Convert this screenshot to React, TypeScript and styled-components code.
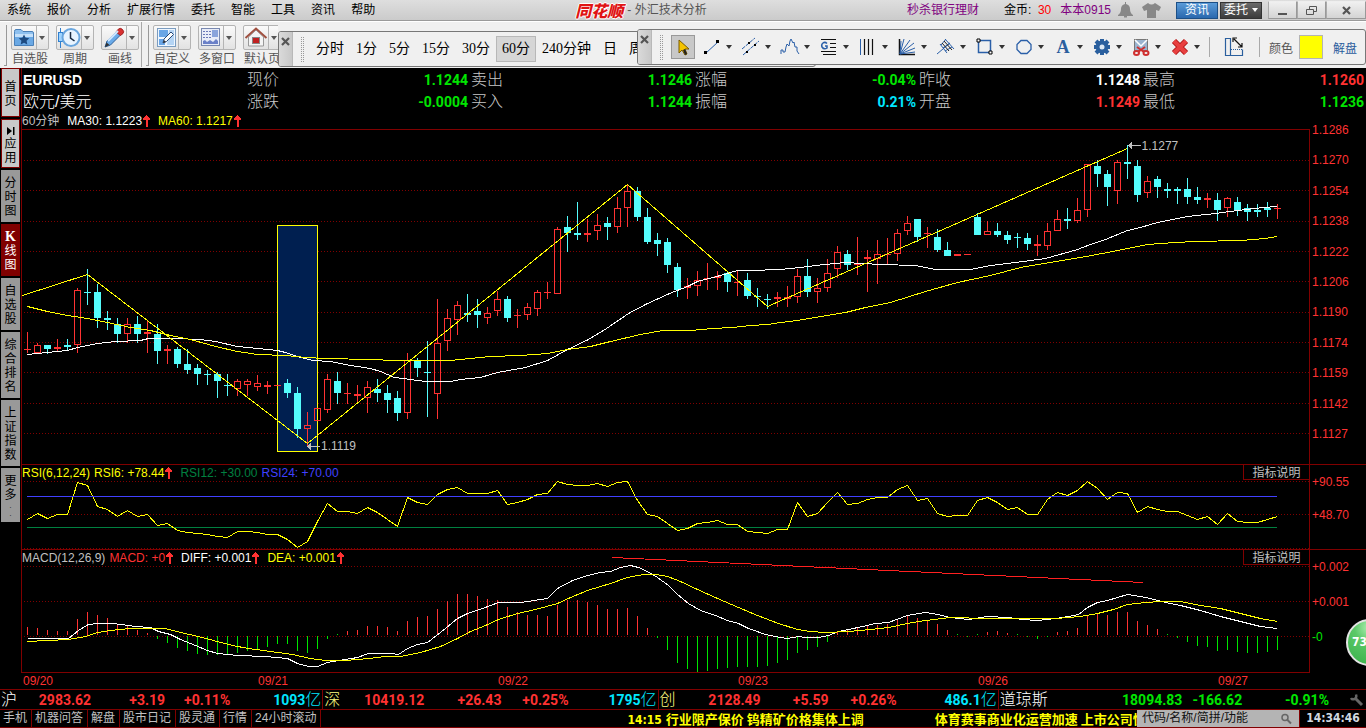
import React from 'react';
import styled, { createGlobalStyle } from 'styled-components';

const sans = '"Liberation Sans", "Noto Sans CJK SC", sans-serif';
const song = '"Liberation Serif", "Noto Sans CJK SC", serif';
const num = 'Roboto, "Noto Sans CJK SC", sans-serif';
const cond = '"DejaVu Sans Condensed", "Noto Sans CJK SC", sans-serif';

const RED = '#ff3232';
const GREEN = '#00e600';
const CYAN = '#00e6ff';
const LINE = '#800000';
const UP = '#ff3232';
const DOWN = '#54fcfc';

const GlobalStyle = createGlobalStyle`
  * { box-sizing: border-box; }
  body { margin: 0; background: #000; font-family: ${sans}; font-size: 12px; }
  button { font: inherit; color: inherit; border: 0; padding: 0; margin: 0; background: none; cursor: pointer; white-space: nowrap; }
  dl, dt, dd { margin: 0; }
  a { text-decoration: none; color: inherit; }
  svg { display: block; }
`;

const Page = styled.div`
  position: relative;
  display: flex;
  flex-direction: column;
  min-height: 100vh;
  min-width: 1100px;
  overflow: hidden;
  color: #c0c0c0;
`;

/* ---------- title bar ---------- */

const TitleBar = styled.header`
  display: flex;
  align-items: center;
  justify-content: space-between;
  height: 21px;
  background: linear-gradient(#dedede, #cbcbcb);
  border-bottom: 1px solid #9a9a9a;
  color: #000;
  line-height: 20px;
`;

const Menu = styled.nav`
  display: flex;
  gap: 16px;
  padding-left: 7px;
`;

const AppTitle = styled.div`
  display: flex;
  align-items: center;
  gap: 4px;
  color: #555;
`;

const Logo = styled.strong`
  color: #e01414;
  font: italic 900 16px/20px "Noto Sans CJK SC", sans-serif;
  text-shadow: 1px 0 #fff, -1px 0 #fff, 0 1px #fff, 0 -1px #fff;
`;

const TitleRight = styled.div`
  display: flex;
  align-items: center;
`;

const PurpleLink = styled.a`
  color: #800080;
`;

const Coins = styled.span`
  margin: 0 9px 0 25px;
  b { color: #f00; font-weight: 400; }
`;

const TitleIcons = styled.div`
  display: flex;
  align-items: center;
  gap: 9px;
  margin: 0 15px 0 7px;
`;

const TitleButton = styled.button<{ $blue?: boolean }>`
  width: 42px;
  height: 17px;
  margin-right: 2px;
  border: 1px solid ${p => (p.$blue ? '#1c4f86' : '#333')};
  background: ${p => (p.$blue ? 'linear-gradient(#5a9bd8, #2a68ae)' : 'linear-gradient(#6a6a6a, #3c3c3c)')};
  color: #fff;
  line-height: 15px;
  display: flex;
  align-items: center;
  justify-content: center;
  gap: 4px;
`;

const WindowButtons = styled.div`
  display: flex;
  margin-left: 4px;
`;

const WindowButton = styled.button<{ $wide?: boolean }>`
  width: ${p => (p.$wide ? 40 : 29)}px;
  height: 18px;
  border: 1px solid #999;
  border-top-color: #eee;
  border-left-color: #aaa;
  background: linear-gradient(#f0f0f0, #d4d4d4);
  display: flex;
  align-items: center;
  justify-content: center;
`;

/* ---------- tool bars ---------- */

const ToolArea = styled.div`
  display: flex;
  align-items: flex-start;
  height: 47px;
  background: #f0f0f0;
  border-top: 1px solid #fff;
  color: #000;
`;

const MainTools = styled.div`
  display: flex;
  flex: none;
  width: 278px;
  height: 45px;
  overflow: hidden;
`;

const ToolGroup = styled.div`
  display: flex;
  gap: 7px;
  flex: none;
  padding: 3px 2px 0 4px;
  border-right: 1px solid #a8a8a8;
  &::before {
    content: '';
    width: 2px;
    height: 40px;
    margin-right: -3px;
    border-right: 1px solid #999;
    border-bottom: 1px solid #999;
  }
`;

const BigTool = styled.button`
  width: 38px;
  color: #555;
  display: flex;
  flex-direction: column;
  align-items: center;
  line-height: 18px;
`;

const BigToolFace = styled.span`
  display: flex;
  align-items: center;
  width: 38px;
  height: 25px;
  border: 1px solid #b4b4b4;
  border-radius: 2px;
  background: linear-gradient(#fafafa, #e2e2e2);
  > :first-child { flex: 1; height: 23px; border-right: 1px solid #b4b4b4; }
  > :last-child { margin: 0 3px 0 2px; }
`;

const FloatBar = styled.div<{ $under?: boolean }>`
  position: relative;
  z-index: ${p => (p.$under ? 0 : 1)};
  display: flex;
  align-items: center;
  flex: ${p => (p.$under ? 'none' : '1')};
  width: ${p => (p.$under ? '538px' : 'auto')};
  margin: ${p => (p.$under ? '9px -179px 0 0' : '7px 0 0 0')};
  height: 36px;
  overflow: hidden;
  border: 1px solid #777;
  border-radius: 3px;
  background: #f0f0f0;
`;

const CloseStrip = styled.button`
  align-self: stretch;
  flex: none;
  width: 14px;
  padding-top: 5px;
  display: flex;
  justify-content: center;
  background: linear-gradient(90deg, #dadada, #c8c8c8);
  border-right: 1px solid #b8b8b8;
`;

const Grip = styled.i`
  flex: none;
  width: 3px;
  height: 25px;
  margin: 0 6px 0 8px;
  border: 1px dotted #999;
  border-width: 0 1px;
`;

const PeriodButton = styled.button<{ $on?: boolean }>`
  flex: none;
  height: 26px;
  padding: 0 5px;
  border: 1px solid ${p => (p.$on ? '#b8b8b8' : 'transparent')};
  background: ${p => (p.$on ? '#d6d6d6' : 'none')};
  font: 14px/24px ${song};
`;

const PointerButton = styled.button`
  flex: none;
  width: 24px;
  height: 24px;
  margin: 0 5px 0 2px;
  border: 1px solid #999;
  background: #c8c8c8;
`;

const DrawTool = styled.button`
  flex: none;
  display: flex;
  align-items: center;
  gap: 2px;
  width: 39px;
`;

const Rule = styled.i`
  flex: none;
  width: 1px;
  height: 20px;
  margin: 0 13px 0 2px;
  background: #aaa;
`;

const PlainTool = styled.button<{ $blue?: boolean }>`
  flex: none;
  margin-right: ${p => (p.$blue ? 0 : 12)}px;
  color: ${p => (p.$blue ? '#2a5c9c' : '#555')};
`;

const ColorLabel = styled.label`
  display: flex;
  align-items: center;
  flex: none;
  gap: 6px;
  margin: 0 10px 0 -4px;
  color: #555;
`;

const Swatch = styled.button`
  width: 24px;
  height: 24px;
  border: 1px solid #b4b4b4;
  background: #ff0;
`;

/* ---------- workspace ---------- */

const Workspace = styled.div`
  display: flex;
  flex: 1;
`;

const Sidebar = styled.nav`
  display: flex;
  flex-direction: column;
  gap: 2px;
  flex: none;
  width: 21px;
  padding: 0 1px 0 1px;
  background: #000;
`;

const SideTab = styled.button<{ $kind?: 'light' | 'on' }>`
  display: flex;
  flex-direction: column;
  align-items: center;
  padding: ${p => (p.$kind === 'light' ? '2px 0 0' : '6px 0 4px')};
  min-height: ${p => (p.$kind === 'light' ? 49 : 52)}px;
  justify-content: center;
  border: ${p => (p.$kind === 'light' ? `1px solid ${LINE}` : '0')};
  background: ${p => (p.$kind === 'light' ? '#c8c8c8' : p.$kind === 'on' ? LINE : '#999')};
  color: ${p => (p.$kind === 'on' ? '#fff' : '#000')};
  font-size: 12px;
  line-height: 14px;
  b { font-family: ${song}; font-size: 14px; }
  small { font-size: 7px; line-height: 8px; }
`;

const Main = styled.main`
  display: flex;
  flex-direction: column;
  flex: 1;
  min-width: 0;
  border-left: 1px solid ${LINE};
`;

const Quotes = styled.dl`
  display: grid;
  grid-template-columns: repeat(6, 1fr);
  grid-auto-rows: 22px;
  padding: 1px 0 0;
`;

const Quote = styled.div`
  display: flex;
  justify-content: space-between;
  align-items: center;
  padding: 0 2px 0 1px;
`;

const QuoteName = styled.dt<{ $title?: boolean }>`
  color: ${p => (p.$title ? '#fff' : '#c8c8c8')};
  font: 300 16px/22px ${sans};
  b { font-size: 14px; font-weight: 700; }
`;

const QuoteValue = styled.dd<{ $c: string }>`
  color: ${p => p.$c};
  font: 700 14px/22px ${num};
`;

const InfoRow = styled.div<{ $over?: boolean }>`
  display: flex;
  align-items: center;
  height: 16px;
  ${p => p.$over && 'position: absolute; inset: 0 0 auto 0; z-index: 1;'}
`;

const Stat = styled.span<{ $c: string; $gap?: number }>`
  display: flex;
  align-items: center;
  gap: 1px;
  margin-right: ${p => p.$gap ?? 8}px;
  color: ${p => p.$c};
  line-height: 16px;
  white-space: pre;
`;

const HelpButton = styled.button`
  align-self: flex-start;
  width: 66px;
  height: 15px;
  margin-left: auto;
  border: 1px solid ${LINE};
  border-width: 0 0 1px 1px;
  color: #c0c0c0;
  line-height: 16px;
`;

const Panel = styled.section<{ $size: number }>`
  display: grid;
  grid-template-columns: minmax(0, 1fr) 57px;
  grid-template-rows: minmax(0, 1fr);
  flex: ${p => p.$size} 1 ${p => p.$size}px;
  min-height: 0;
`;

const Plot = styled.div<{ $last?: boolean }>`
  position: relative;
  min-height: 0;
  border-top: 1px solid ${LINE};
  border-bottom: ${p => (p.$last ? `1px solid ${LINE}` : '0')};
`;

const Drawing = styled.svg`
  position: absolute;
  width: 100%;
  height: 100%;
  shape-rendering: crispEdges;
  polyline, line { vector-effect: non-scaling-stroke; fill: none; }
`;

const Axis = styled.div<{ $kind: 'price' | 'rsi' | 'macd' }>`
  display: flex;
  flex-direction: column;
  padding-left: 2px;
  border-left: 1px solid ${LINE};
  color: ${RED};
  line-height: 16px;
  ${p => (p.$kind === 'price'
    ? 'justify-content: space-between; padding-bottom: 22px; span:first-child { margin-top: -7px; }'
    : `border-top: 1px solid ${LINE}; padding-top: 9px; gap: ${p.$kind === 'rsi' ? 17 : 19}px;`)}
`;

const Zero = styled.span`
  color: ${GREEN};
`;

const Marker = styled.span<{ $x: number; $y: number }>`
  position: absolute;
  left: ${p => p.$x}%;
  top: ${p => p.$y}%;
  display: flex;
  align-items: center;
  gap: 1px;
  height: 16px;
  margin-top: -8px;
  color: #c0c0c0;
`;

const Dates = styled.div`
  display: grid;
  grid-template-columns: 235fr 240fr 240fr 240fr 240fr 148fr;
  height: 16px;
  padding-left: 23px;
  color: ${RED};
  line-height: 16px;
`;

/* ---------- footer ---------- */

const IndexBar = styled.div`
  display: flex;
  height: 20px;
  border-top: 1px solid ${LINE};
  line-height: 20px;
`;

const IndexItem = styled.a<{ $w: number; $cols: string }>`
  display: grid;
  grid-template-columns: ${p => p.$cols};
  flex: ${p => p.$w} 1 0;
  min-width: 0;
  padding: 0 1px;
  border-right: 1px solid ${LINE};
  font: 700 14px/20px ${num};
  text-align: right;
  white-space: nowrap;
  &:last-of-type { border-right: 0; }
`;

const IndexLead = styled.span`
  display: flex;
  justify-content: space-between;
`;

const IndexName = styled.span<{ $c: string }>`
  color: ${p => p.$c};
  font: 300 16px/20px ${sans};
`;

const Val = styled.span<{ $c: string }>`
  color: ${p => p.$c};
  i { font: 300 16px/20px ${sans}; }
`;

const Wrench = styled.button`
  flex: none;
  width: 36px;
  padding-left: 20px;
`;

const StatusBar = styled.footer`
  display: flex;
  height: 19px;
  border: 1px solid ${LINE};
  border-width: 1px 0;
`;

const BottomTab = styled.button`
  flex: none;
  padding: 0 4px 0 3px;
  border-right: 1px solid ${LINE};
  color: #c0c0c0;
  line-height: 17px;
`;

const Ticker = styled.div`
  display: flex;
  flex: 1;
  min-width: 0;
  overflow: hidden;
  padding-left: 306px;
  gap: 71px;
  color: #ff0;
  font: 700 13px/17px "Noto Sans CJK SC", sans-serif;
  white-space: nowrap;
`;

const NewsItem = styled.a`
  flex: none;
  time { font: 700 12px/17px ${cond}; margin-right: 4px; }
`;

const Search = styled.label`
  display: flex;
  align-items: center;
  flex: none;
  width: 163px;
  padding: 0 5px;
  border-right: 1px solid ${LINE};
  background: #b4b4b4;
  input {
    flex: 1;
    min-width: 0;
    border: 0;
    padding: 0;
    outline: 0;
    background: none;
    font: 12px/17px ${sans};
    color: #000;
  }
  input::placeholder { color: #111; opacity: 1; }
`;

const Clock = styled.time`
  flex: none;
  width: 66px;
  text-align: center;
  color: #d0d8e0;
  font: 700 12px/17px ${cond};
`;

const Ball = styled.button`
  position: absolute;
  right: -27px;
  bottom: 62px;
  z-index: 2;
  width: 47px;
  height: 47px;
  padding: 0 0 0 4px;
  border: 2px solid #e4e4e4;
  border-radius: 50%;
  background: radial-gradient(circle at 50% 15%, #b0f0b4 0, #5cc868 35%, #37b048 100%);
  color: #fff;
  font: 700 12px/43px ${cond};
  text-align: left;
`;

/* ---------- small drawings ---------- */

const Caret = ({ color = '#333' }: { color?: string }) => (
  <svg width="6" height="4" viewBox="0 0 6 4"><path d="M0 0h6L3 4z" fill={color} /></svg>
);

const UpArrow = () => (
  <svg width="7" height="12" viewBox="0 0 7 12" shapeRendering="crispEdges">
    <path d="M3 0h1v1h1v1h1v1h1v2H5v7H3V5H0V3h1V2h1V1h1z" fill={UP} />
  </svg>
);

const Cross = ({ size = 9 }: { size?: number }) => (
  <svg width={size} height={size} viewBox="0 0 9 9"><path d="M1 1l7 7M8 1L1 8" stroke="#555" strokeWidth="2.200" /></svg>
);

const LeftArrow = () => (
  <svg width="13" height="7" viewBox="0 0 13 7" shapeRendering="crispEdges">
    <path d="M0 3h1V2h1V1h1V0h1v3h9v1H4v3H3V6H2V5H1V4H0z" fill="#c0c0c0" />
  </svg>
);

const Svg24 = ({ children }: { children: React.ReactNode }) => (
  <svg width="24" height="24" viewBox="0 0 24 24" fill="none" stroke="#2a5fa8" strokeWidth="1">{children}</svg>
);

const bigIcons: Record<string, React.ReactNode> = {
  folder: (
    <>
      <path d="M2.500 5.500q0-2 1.500-2h5l2 2h9q1.500 0 1.500 1.500v12.500h-19z" fill="#8ec0ef" stroke="#4a80b8" />
      <path d="M3 8h18v11H3z" fill="#6aa8e4" stroke="none" />
      <path d="M3 8h18v3H3z" fill="#c4e0fa" stroke="none" />
      <path d="M12 8.500l1.600 3.300 3.700.5-2.700 2.500.7 3.600-3.300-1.700-3.300 1.700.7-3.600-2.700-2.500 3.700-.5z" fill="#1d4a80" stroke="none" />
    </>
  ),
  clock: (
    <>
      <path d="M3.500 2v20" stroke="#3080d0" />
      <rect x="1.500" y="6.500" width="4" height="9" fill="#9fd4ff" stroke="#3080d0" />
      <circle cx="14" cy="11.500" r="8.500" fill="#e8f4ff" stroke="#6aa6de" strokeWidth="2" />
      <path d="M13.500 6v6l4 3" stroke="#1a2a40" strokeWidth="1.500" />
    </>
  ),
  pencil: (
    <>
      <path d="M3 21l2-6L16 4l4 3.500L8.500 19z" fill="#6aaae8" stroke="#2b5f9a" />
      <path d="M14 6l2.500-3q2-1.500 4 .5t.5 4L18.500 9.500z" fill="#d83030" stroke="#a02020" />
      <path d="M6 15L16 5" stroke="#d0e8ff" strokeWidth="2" />
      <path d="M3 21l1.500-4.500L7.500 19z" fill="#333" stroke="none" />
    </>
  ),
  custom: (
    <>
      <rect x="3.500" y="2.500" width="18" height="18" fill="#eef6ff" stroke="#7a9cc0" />
      <path d="M5 4h9v7H5zM5 13h6v6H5z" fill="#6aa6e6" stroke="none" />
      <path d="M15 4h5v15h-7z" fill="#b4d4f4" stroke="none" />
      <path d="M9 17l1-4 7-7 2.500 2.500-7 7z" fill="#fff" stroke="#2a4a78" />
      <path d="M9 17l1-3 2 2z" fill="#333" stroke="none" />
    </>
  ),
  windows: (
    <>
      <rect x="2.500" y="2.500" width="18" height="17" fill="#e8ecf8" stroke="#7888b0" />
      <path d="M4 5.500h8M4 8.500h8M4 11.500h8" stroke="#6a78b8" strokeDasharray="2 1" />
      <path d="M13 4h6v7h-6z" fill="#8aa4dc" stroke="none" />
      <path d="M4 18v-3l2-1 2 2 3-2 3 2 3-3 2 2v3z" fill="#6a80c8" stroke="none" />
    </>
  ),
  home: (
    <>
      <path d="M4.500 11v9h15v-9L12 4z" fill="#f4f4f4" stroke="#999" />
      <path d="M1.500 12L12 2.500 22.500 12" stroke="#a05040" strokeWidth="2" />
      <rect x="8.500" y="11.500" width="7" height="6" fill="#c02020" stroke="#888" />
    </>
  ),
};

const BigIcon = ({ name }: { name: string }) => (
  <span><svg width="24" height="23" viewBox="0 0 24 23" fill="none">{bigIcons[name]}</svg></span>
);

const drawIcons: { name: string; art: React.ReactNode }[] = [
  { name: '线段', art: <><path d="M6 18L18 7" /><path d="M4 16h3v3H4zM16 5h3v3h-3z" fill="#000" stroke="none" /></> },
  { name: '平行线', art: <><path d="M3 14L16 3M4 20L20 6" strokeDasharray="4 1" /><path d="M9 7h2v2H9zM15 9h2v2h-2zM7 16h2v2H7z" fill="#000" stroke="none" /></> },
  { name: '波浪线', art: <path d="M3 19v-4h2v2h2l1-5 1-3 2 2 1-5 1-2 2 4 1-1 1 5h2v4l2 3" /> },
  { name: '黄金分割', art: <><path d="M4 4.500h15M13 8.500h6M13 12.500h6M4 16.500h15M6 19.500h13" stroke="#111" /><path d="M10 8.500Q8 6.500 6 8t-1 4q2 3 5 1v-2H8" strokeWidth="1.500" /></> },
  { name: '周期线', art: <><path d="M8.500 4v16M12.500 4v16M16.500 4v16" stroke="#111" strokeWidth="1.200" /><path d="M4.500 4v16" stroke="#2a5fa8" /></> },
  { name: '扇形线', art: <><path d="M4.500 4v15.500H20" stroke="#111" strokeWidth="1.500" /><path d="M5 19L9 4M5 19L15 5M5 19L19 8M5 19l15-6M5 19l15-2M5 19L6 6" /></> },
  { name: '音叉线', art: <><path d="M3 19L16 8M6 9l7 9M11 4l9 10" /><path d="M7 10l5-6M9 13l7-5M11 16l7-4" strokeWidth="1" /><path d="M8 8l7 8M10 6l8 9" stroke="#222" /></> },
  { name: '矩形', art: <><rect x="5.500" y="5.500" width="12" height="12" strokeWidth="1.500" /><path d="M4 4h3v3H4zM16 16h3v3h-3z" fill="#fff" stroke="#000" /></> },
  { name: '圆形', art: <path d="M9 5.500h6l4 4v5l-4 4H9l-4-4v-5z" strokeWidth="1.300" /> },
  { name: '文字', art: null },
  { name: '设置', art: <><path d="M12 4v16M4 12h16M6 6l12 12M18 6L6 18" stroke="#2a5f9e" strokeWidth="4" /><circle cx="12" cy="12" r="6.500" fill="#2a5f9e" stroke="none" /><circle cx="12" cy="12" r="2.500" fill="#dde8f4" stroke="none" /></> },
  { name: '截图', art: <><rect x="5.500" y="4.500" width="13" height="11" fill="#9ab4d0" stroke="#777" /><path d="M6 5l6 6 6-6" stroke="#fff" strokeWidth="1.500" /><ellipse cx="7.500" cy="18" rx="2.500" ry="2" stroke="#d03030" strokeWidth="2" /><ellipse cx="17" cy="18" rx="2.500" ry="2" stroke="#d03030" strokeWidth="2" /><path d="M8 12l7 5M16 12l-7 5" stroke="#d03030" strokeWidth="2" /></> },
  { name: '删除', art: <><path d="M6 6l12 12M18 6L6 18" stroke="#b01818" strokeWidth="6" /><path d="M6 6l12 12M18 6L6 18" stroke="#e84040" strokeWidth="4" /></> },
];

const LetterA = styled.span`
  width: 24px;
  color: #2a5f9e;
  font: 700 18px/24px "Liberation Serif", serif;
  text-align: center;
`;

/* ---------- data ---------- */

/* Each candle: direction, then the y of high, body top, body bottom and low. */
const candles = `r332 349 350 353,r343 345 353 353,c345 345 349 354,r339 347 349 351,c339 345 347 350,r288 290 345 353,c269 292 293 305,c284 292 318 328,c311 318 320 330,c318 324 334 343,
r318 324 334 343,c316 324 334 343,r320 332 334 353,c324 334 351 364,r345 349 351 364,c347 349 364 368,c349 364 370 374,c364 368 374 385,c370 374 375 385,c372 374 381 398,
c374 385 386 396,r379 381 389 396,r379 381 385 396,r375 383 387 391,r381 385 387 394,r385 385 386 386,c379 383 393 398,c387 393 429 438,r412 425 429 446,r408 408 421 421,
r374 379 410 413,c372 381 393 404,r383 393 394 404,r385 394 396 402,r381 387 398 413,c379 389 393 402,c385 393 400 413,c391 398 413 421,r353 360 413 419,c358 360 368 377,
c341 372 373 417,r299 343 394 419,r309 318 341 351,r301 305 320 335,c294 313 315 322,c299 311 315 328,r307 313 318 324,r291 299 311 316,c296 299 318 322,r309 315 316 328,
r303 307 315 320,r290 292 309 316,r282 292 293 299,r227 229 294 294,c216 227 233 252,c202 233 235 240,r219 233 235 242,r214 225 231 240,c217 223 227 240,r197 208 227 233,
r184 191 208 227,c187 191 217 221,c208 217 242 244,c233 240 244 256,c238 242 265 273,c263 267 290 297,r278 286 288 299,r271 280 286 296,r263 278 279 290,r271 276 278 290,
c271 273 282 292,r271 282 283 296,c273 280 296 299,c288 296 297 307,c294 299 300 309,r292 297 299 307,r286 297 299 307,r269 276 297 303,c259 276 292 297,r278 288 292 303,
r259 273 288 292,r246 252 269 278,c250 254 265 270,r237 264 265 275,r250 257 259 292,r240 254 259 284,r238 254 255 265,r229 233 254 261,r216 223 231 235,c219 219 237 242,
r227 233 234 248,c229 237 250 252,c242 250 256 256,r254 254 256 256,r254 254 255 255,c213 217 235 235,r221 231 235 235,c223 231 235 237,c231 235 240 244,c233 237 238 248,
c233 238 244 250,r235 244 246 256,r223 231 246 250,r210 219 231 231,c208 219 221 229,r198 210 221 223,r164 164 210 217,c160 166 174 187,c170 174 187 206,r160 162 191 204,
c145 162 164 179,c160 166 195 202,r176 181 193 198,c176 179 187 198,c183 189 191 198,c187 189 191 204,c178 189 197 204,c187 197 200 204,r193 198 200 208,c193 200 210 221,
r197 198 208 217,c197 202 210 216,c204 208 212 221,c204 210 212 217,c202 208 210 217,r204 208 209 219`
  .split(',')
  .map(s => {
    const t = s.trim();
    return { up: t[0] === 'r', v: t.slice(1).split(' ').map(Number) };
  });

const MA30 = '27,354 47,352 67,350 77,347 87,345 97,343 115,341 140,340 148,338 175,338 200,339 215,341 237,346 257,348 277,350 285,352 300,357 313,360 330,361 350,365 370,368 380,371 394,377 410,379 425,381 450,381 460,379 480,377 497,372 525,367 547,360 567,349 588,339 606,328 628,313 645,304 669,293 687,286 697,281 720,275 737,270 750,270 780,269 800,267 815,265 845,262 880,264 915,265 935,269 970,269 990,265 1015,262 1045,258 1077,249 1090,244 1105,239 1127,230 1140,227 1157,222 1187,216 1215,213 1237,210 1263,207 1277,206';
const MA60 = '27,306 47,311 67,315 87,318 107,322 130,327 150,330 170,335 190,339 215,346 237,351 257,354 285,355 305,357 325,358 370,359 395,360 450,360 470,358 490,356 520,355 547,353 567,349 590,346 610,341 640,334 662,330 690,330 712,328 732,327 750,325 767,324 780,322 797,320 820,316 845,312 865,307 890,302 925,291 957,282 990,275 1020,267 1050,262 1080,257 1107,252 1127,248 1147,244 1175,242 1195,241 1240,240 1265,238 1277,236';
const ZIGZAG = '22,295 87,274 307,443 627,184 767,306 1127,148';

const RSI = [519, 513, 518, 514, 514, 482, 485, 506, 509, 516, 510, 516, 514, 525, 523, 530, 532, 533, 534, 536, 537, 531, 531, 532, 534, 534, 539, 547, 541, 521, 503, 511, 511, 513, 507, 512, 519, 526, 497, 502, 504, 494, 489, 487, 493, 493, 493, 490, 504, 502, 499, 494, 493, 481, 484, 485, 485, 483, 486, 482, 481, 500, 514, 516, 523, 530, 528, 523, 522, 520, 524, 524, 531, 532, 533, 529, 529, 502, 516, 513, 502, 492, 504, 503, 499, 497, 497, 489, 485, 500, 498, 513, 516, 515, 515, 500, 497, 502, 509, 507, 514, 514, 499, 492, 495, 490, 481, 488, 499, 492, 493, 512, 506, 509, 511, 511, 515, 519, 516, 524, 513, 521, 522, 522, 519, 516];

const HIST = [8, 7, 5, 4, 4, 16, 23, 20, 17, 11, 9, 5, 2, -3, -7, -12, -15, -18, -19, -19, -19, -17, -15, -13, -11, -8, -8, -15, -17, -13, -3, 1, 4, 5, 9, 9, 8, 4, 14, 18, 19, 26, 34, 41, 41, 39, 36, 35, 28, 23, 20, 20, 19, 30, 35, 35, 33, 30, 26, 26, 27, 19, 7, -2, -14, -27, -33, -36, -35, -33, -32, -31, -31, -31, -30, -27, -24, -17, -14, -11, -6, 4, 6, 7, 9, 10, 11, 15, 19, 17, 15, 11, 5, 1, -1, 1, 3, 4, 2, 1, -1, -3, -1, 3, 4, 7, 20, 22, 20, 23, 23, 14, 10, 6, 1, -2, -6, -10, -11, -15, -14, -16, -17, -17, -16, -14];

const DIFF = '27,638 68,638 78,630 88,624 97,623 113,623 135,626 150,627 158,631 170,634 180,639 195,645 207,650 217,653 227,654 237,655 265,656 287,658 297,663 308,666 317,666 327,662 345,659 357,657 368,653 390,653 398,654 407,648 417,644 427,642 440,632 457,618 467,613 482,608 498,602 520,602 547,598 557,588 572,580 587,575 600,572 610,571 620,567 630,565 638,567 647,571 657,577 668,585 677,594 688,603 700,610 715,615 727,620 738,623 748,628 765,634 780,637 787,638 798,636 805,637 818,637 828,635 838,631 848,629 862,626 875,623 888,622 907,615 925,612 937,614 950,617 968,619 987,616 1008,617 1022,619 1037,620 1055,618 1068,616 1078,614 1087,607 1097,602 1107,600 1117,597 1127,594 1140,596 1150,598 1165,602 1180,605 1200,610 1220,616 1240,621 1260,626 1277,628';
const DEA = '27,641 47,640 68,639 85,636 97,632 110,630 130,628 165,628 180,632 198,636 213,640 232,645 248,648 270,651 292,654 310,658 325,660 345,660 368,658 385,656 400,656 420,652 440,646 457,638 470,631 485,625 498,619 517,613 535,609 557,603 570,597 587,590 610,583 627,577 643,574 655,574 667,576 680,581 697,589 717,598 738,607 757,615 778,623 797,629 810,631 825,632 848,631 870,629 888,627 907,623 925,620 950,617 987,618 1030,618 1055,618 1080,616 1097,613 1113,609 1127,604 1145,602 1160,601 1180,601 1200,605 1220,608 1240,613 1260,618 1277,621';

const barX = (i: number) => 27 + i * 10;

const Grid = ({ rows }: { rows: number[] }) => (
  <>
    {rows.map(y => (
      <line key={y} x1="24" x2="1309" y1={y + 0.5} y2={y + 0.5} stroke={LINE} strokeDasharray="1 2" />
    ))}
  </>
);

const Curve = ({ points, color }: { points: string; color: string }) => (
  <polyline points={points} stroke={color} transform="translate(0.5 0.5)" />
);

const Candle = ({ i, up, v }: { i: number; up: boolean; v: number[] }) => {
  const [hi, top, bot, lo] = v;
  const x = barX(i);
  const h = bot - top;
  const hollow = up && h > 2;
  return (
    <g fill={up ? UP : DOWN}>
      {top > hi && <rect x={x} y={hi} width="1" height={top - hi} />}
      {lo > bot && <rect x={x} y={bot} width="1" height={lo - bot} />}
      {hollow
        ? <rect x={x - 2.5} y={top + 0.5} width="6" height={h - 1} fill="none" stroke={UP} />
        : <rect x={x - 3} y={top} width="7" height={h} />}
    </g>
  );
};

const PriceChart = () => (
  <Drawing viewBox="22 130 1287 334" preserveAspectRatio="none">
    <Grid rows={[160, 190, 221, 251, 281, 312, 342, 372, 403, 433]} />
    <rect x="277.500" y="225.500" width="40" height="226" fill="#001f50" stroke="#ff0" />
    {candles.map((c, i) => <Candle key={i} i={i} up={c.up} v={c.v} />)}
    <Curve points={MA30} color="#fff" />
    <Curve points={MA60} color="#ff0" />
    <Curve points={ZIGZAG} color="#ff0" />
  </Drawing>
);

const RsiChart = () => (
  <Drawing viewBox="22 465 1287 84" preserveAspectRatio="none">
    <Grid rows={[481, 514, 548]} />
    <line x1="27" x2="1277" y1="527.500" y2="527.500" stroke="#008040" />
    <Curve points={RSI.map((y, i) => `${barX(i)},${y}`).join(' ')} color="#ff0" />
    <line x1="27" x2="1277" y1="496.500" y2="496.500" stroke="#4040ff" />
  </Drawing>
);

const MacdChart = () => (
  <Drawing viewBox="22 550 1287 122" preserveAspectRatio="none">
    <Grid rows={[566, 601, 636]} />
    {HIST.map((v, i) => (
      <rect key={i} x={barX(i)} width="1" y={v > 0 ? 635 - v : 636} height={Math.abs(v)} fill={v > 1 ? UP : GREEN} />
    ))}
    <Curve points={DIFF} color="#fff" />
    <Curve points={DEA} color="#ff0" />
    <Curve points="612,557 1143,582" color="#ff2020" />
  </Drawing>
);

const quotes: [string, string, string][] = [
  ['现价', '1.1244', GREEN], ['卖出', '1.1246', GREEN], ['涨幅', '-0.04%', GREEN], ['昨收', '1.1248', '#fff'], ['最高', '1.1260', RED],
  ['涨跌', '-0.0004', GREEN], ['买入', '1.1244', GREEN], ['振幅', '0.21%', CYAN], ['开盘', '1.1249', RED], ['最低', '1.1236', GREEN],
];

const QuoteCell = ({ q }: { q: [string, string, string] }) => (
  <Quote><QuoteName>{q[0]}</QuoteName><QuoteValue $c={q[2]}>{q[1]}</QuoteValue></Quote>
);

const indexes = [
  { name: '沪', nc: '#fff', w: 323, cols: '90fr 74fr 65fr 91fr', c: RED, v: ['2983.62', '+3.19', '+0.11%'], sum: '1093' },
  { name: '深', nc: '#ffff80', w: 335, cols: '100fr 77fr 67fr 88fr', c: RED, v: ['10419.12', '+26.43', '+0.25%'], sum: '1795' },
  { name: '创', nc: '#ffff80', w: 340, cols: '101fr 68fr 68fr 100fr', c: RED, v: ['2128.49', '+5.59', '+0.26%'], sum: '486.1' },
  { name: '道琼斯', nc: '#fff', w: 332, cols: '183fr 60fr 87fr', c: GREEN, v: ['18094.83', '-166.62', '-0.91%'], sum: '' },
];

const Stacked = ({ text }: { text: string }) => (
  <>{[...text].map((ch, i) => (ch === 'K' ? <b key={i}>K</b> : ch === '.' ? <small key={i}>.</small> : <span key={i}>{ch}</span>))}</>
);

export default function App() {
  return (
    <Page>
      <GlobalStyle />
      <TitleBar>
        <Menu>
          {['系统', '报价', '分析', '扩展行情', '委托', '智能', '工具', '资讯', '帮助'].map(m => <button key={m}>{m}</button>)}
        </Menu>
        <AppTitle><Logo>同花顺</Logo><span>- 外汇技术分析</span></AppTitle>
        <TitleRight>
          <PurpleLink href="#">秒杀银行理财</PurpleLink>
          <Coins>金币: &nbsp;<b>30</b></Coins>
          <PurpleLink href="#">本本0915</PurpleLink>
          <TitleIcons>
            <svg width="15" height="16" viewBox="0 0 15 16" fill="#888"><path d="M7 0h1v2q4 1 4 5 0 4 3 6v1H0v-1q3-2 3-6 0-4 4-5zM6 14h3v1.500H6z" /></svg>
            <svg width="19" height="15" viewBox="0 0 19 15" fill="#888"><path d="M6 0q3.500 3 7 0l6 4-2 4-3-1v8H5V7L2 8 0 4z" /></svg>
          </TitleIcons>
          <TitleButton $blue>资讯</TitleButton>
          <TitleButton>委托<Caret color="#fff" /></TitleButton>
          <WindowButtons>
            <WindowButton aria-label="最小化"><svg width="9" height="9"><path d="M0 7h9v2H0z" fill="#555" /></svg></WindowButton>
            <WindowButton aria-label="还原"><svg width="11" height="9" fill="none" stroke="#555"><path d="M3.500 3V.5h7v5H8M.5 3.500h7v5h-7z" /></svg></WindowButton>
            <WindowButton $wide aria-label="关闭"><Cross /></WindowButton>
          </WindowButtons>
        </TitleRight>
      </TitleBar>

      <ToolArea>
        <MainTools>
          <ToolGroup>
            {[['folder', '自选股'], ['clock', '周期'], ['pencil', '画线']].map(([icon, label]) => (
              <BigTool key={label}><BigToolFace><BigIcon name={icon} /><Caret color="#555" /></BigToolFace>{label}</BigTool>
            ))}
          </ToolGroup>
          <ToolGroup>
            {[['custom', '自定义'], ['windows', '多窗口'], ['home', '默认页']].map(([icon, label]) => (
              <BigTool key={label}><BigToolFace><BigIcon name={icon} /><Caret color="#555" /></BigToolFace>{label}</BigTool>
            ))}
          </ToolGroup>
        </MainTools>
        <FloatBar $under>
          <CloseStrip aria-label="关闭周期栏"><Cross /></CloseStrip>
          <Grip />
          {['分时', '1分', '5分', '15分', '30分', '60分', '240分钟', '日', '周'].map(p => (
            <PeriodButton key={p} $on={p === '60分'}>{p}</PeriodButton>
          ))}
        </FloatBar>
        <FloatBar>
          <CloseStrip aria-label="关闭画线栏"><Cross /></CloseStrip>
          <Grip />
          <PointerButton aria-label="选择">
            <svg width="22" height="22" viewBox="0 0 22 22"><path d="M7 4v13l3-3 3 5 2-1-2-5h4z" fill="#f5c400" stroke="#7a5a00" /><path d="M11 14l2 5 2-1-2-5z" fill="#222" /></svg>
          </PointerButton>
          {drawIcons.map(d => (
            <DrawTool key={d.name} aria-label={d.name}>
              {d.art ? <Svg24>{d.art}</Svg24> : <LetterA>A</LetterA>}
              <Caret />
            </DrawTool>
          ))}
          <Rule />
          <PlainTool aria-label="区间">
            <svg width="22" height="22" viewBox="0 0 22 22" fill="none" stroke="#2a5f9e" strokeWidth="1.200">
              <path d="M2.500 2.500h5v17h-5zM7.500 19.500h12v-6" />
              <path d="M8 13.500h11" strokeDasharray="1 1" />
              <path d="M11 3l8 8M10 6V2h4M19 7v4h-4" stroke="#111" />
            </svg>
          </PlainTool>
          <Rule />
          <ColorLabel>颜色<Swatch aria-label="颜色" /></ColorLabel>
          <PlainTool $blue>解盘</PlainTool>
        </FloatBar>
      </ToolArea>

      <Workspace>
        <Sidebar>
          <SideTab $kind="light"><Stacked text="首页" /></SideTab>
          <SideTab $kind="light">
            <svg width="8" height="12" viewBox="0 0 8 12"><path d="M0 2l5 4-5 4zM6 2h1.500v8H6z" /></svg>
            <Stacked text="应用" />
          </SideTab>
          <SideTab><Stacked text="分时图" /></SideTab>
          <SideTab $kind="on"><Stacked text="K线图" /></SideTab>
          <SideTab><Stacked text="自选股" /></SideTab>
          <SideTab><Stacked text="综合排名" /></SideTab>
          <SideTab><Stacked text="上证指数" /></SideTab>
          <SideTab><Stacked text="更多.." /></SideTab>
        </Sidebar>
        <Main>
          <Quotes>
            <Quote><QuoteName $title><b>EURUSD</b></QuoteName></Quote>
            {quotes.slice(0, 5).map(q => <QuoteCell key={q[0]} q={q} />)}
            <Quote><QuoteName $title>欧元/美元</QuoteName></Quote>
            {quotes.slice(5).map(q => <QuoteCell key={q[0]} q={q} />)}
          </Quotes>
          <InfoRow>
            <Stat $c="#c0c0c0">60分钟</Stat>
            <Stat $c="#fff">MA30: 1.1223<UpArrow /></Stat>
            <Stat $c="#ff0">MA60: 1.1217<UpArrow /></Stat>
          </InfoRow>
          <Panel $size={335}>
            <Plot>
              <PriceChart />
              <Marker $x={22.15} $y={94.7}><LeftArrow />1.1119</Marker>
              <Marker $x={85.9} $y={4.7}><LeftArrow />1.1277</Marker>
            </Plot>
            <Axis $kind="price">
              {['1.1286', '1.1270', '1.1254', '1.1238', '1.1222', '1.1206', '1.1190', '1.1174', '1.1159', '1.1142', '1.1127'].map(p => <span key={p}>{p}</span>)}
            </Axis>
          </Panel>
          <Panel $size={85}>
            <Plot>
              <InfoRow $over>
                <Stat $c="#ff0" $gap={4}>RSI(6,12,24)</Stat>
                <Stat $c="#ff0">RSI6: +78.44<UpArrow /></Stat>
                <Stat $c="#008040" $gap={4}>RSI12: +30.00</Stat>
                <Stat $c="#4040ff">RSI24: +70.00</Stat>
                <HelpButton>指标说明</HelpButton>
              </InfoRow>
              <RsiChart />
            </Plot>
            <Axis $kind="rsi"><span>+90.55</span><span>+48.70</span></Axis>
          </Panel>
          <Panel $size={124}>
            <Plot $last>
              <InfoRow $over>
                <Stat $c="#c0c0c0" $gap={4}>MACD(12,26,9)</Stat>
                <Stat $c={RED}>MACD: +0<UpArrow /></Stat>
                <Stat $c="#fff">DIFF: +0.001<UpArrow /></Stat>
                <Stat $c="#ff0">DEA: +0.001<UpArrow /></Stat>
                <HelpButton>指标说明</HelpButton>
              </InfoRow>
              <MacdChart />
            </Plot>
            <Axis $kind="macd"><span>+0.002</span><span>+0.001</span><Zero>-0</Zero></Axis>
          </Panel>
        </Main>
      </Workspace>

      <Dates>
        {['09/20', '09/21', '09/22', '09/23', '09/26', '09/27'].map(d => <span key={d}>{d}</span>)}
      </Dates>

      <IndexBar>
        {indexes.map(x => (
          <IndexItem key={x.name} href="#" $w={x.w} $cols={x.cols}>
            <IndexLead><IndexName $c={x.nc}>{x.name}</IndexName><Val $c={x.c}>{x.v[0]}</Val></IndexLead>
            <Val $c={x.c}>{x.v[1]}</Val>
            <Val $c={x.c}>{x.v[2]}</Val>
            {x.sum && <Val $c={CYAN}>{x.sum}<i>亿</i></Val>}
          </IndexItem>
        ))}
        <Wrench aria-label="设置">
          <svg width="14" height="14" viewBox="0 0 14 14" fill="none" stroke="#666"><path d="M5 5l7 7" strokeWidth="3" /><path d="M6 1.500Q7 5 4.500 6T1 5" strokeWidth="2.500" /></svg>
        </Wrench>
      </IndexBar>

      <StatusBar>
        {['手机', '机器问答', '解盘', '股市日记', '股灵通', '行情', '24小时滚动'].map(t => <BottomTab key={t}>{t}</BottomTab>)}
        <Ticker>
          <NewsItem href="#"><time>14:15</time>行业限产保价 钨精矿价格集体上调</NewsItem>
          <NewsItem href="#">体育赛事商业化运营加速 上市公司快</NewsItem>
        </Ticker>
        <Search>
          <input aria-label="搜索" placeholder="代码/名称/简拼/功能" />
          <svg width="14" height="12" viewBox="0 0 14 12" fill="none" stroke="#666"><circle cx="5" cy="4.500" r="3" strokeWidth="1.500" /><path d="M7 6.500l4 4" strokeWidth="2" /></svg>
        </Search>
        <Clock>14:34:46</Clock>
      </StatusBar>

      <Ball>73%</Ball>
    </Page>
  );
}
